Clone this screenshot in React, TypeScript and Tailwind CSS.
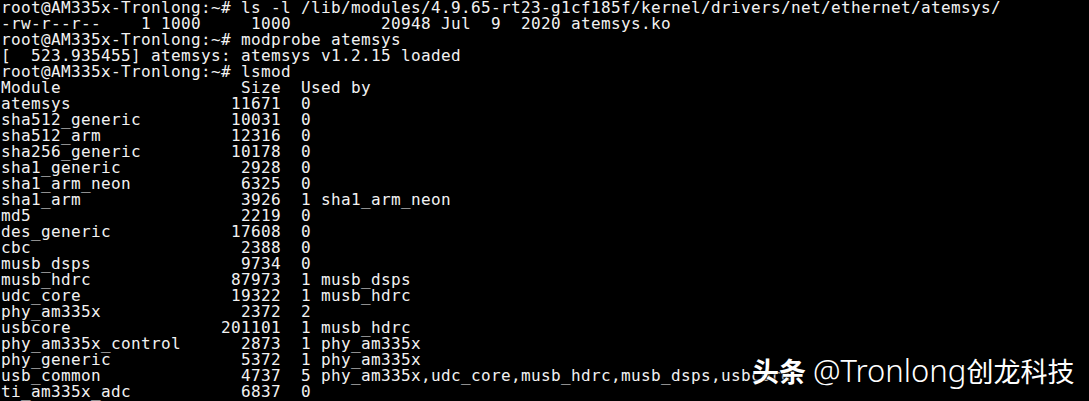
const modules: [string, number, number, string?][] = [
  ["atemsys", 11671, 0],
  ["sha512_generic", 10031, 0],
  ["sha512_arm", 12316, 0],
  ["sha256_generic", 10178, 0],
  ["sha1_generic", 2928, 0],
  ["sha1_arm_neon", 6325, 0],
  ["sha1_arm", 3926, 1, "sha1_arm_neon"],
  ["md5", 2219, 0],
  ["des_generic", 17608, 0],
  ["cbc", 2388, 0],
  ["musb_dsps", 9734, 0],
  ["musb_hdrc", 87973, 1, "musb_dsps"],
  ["udc_core", 19322, 1, "musb_hdrc"],
  ["phy_am335x", 2372, 2],
  ["usbcore", 201101, 1, "musb_hdrc"],
  ["phy_am335x_control", 2873, 1, "phy_am335x"],
  ["phy_generic", 5372, 1, "phy_am335x"],
  ["usb_common", 4737, 5, "phy_am335x,udc_core,musb_hdrc,musb_dsps,usbcore"],
  ["ti_am335x_adc", 6837, 0],
];

const lines = [
  "root@AM335x-Tronlong:~# ls -l /lib/modules/4.9.65-rt23-g1cf185f/kernel/drivers/net/ethernet/atemsys/",
  "-rw-r--r--    1 1000     1000         20948 Jul  9  2020 atemsys.ko",
  "root@AM335x-Tronlong:~# modprobe atemsys",
  "[  523.935455] atemsys: atemsys v1.2.15 loaded",
  "root@AM335x-Tronlong:~# lsmod",
  "Module".padEnd(19) + " " + "Size".padStart(8) + "  Used by",
  ...modules.map(
    ([name, size, count, users]) =>
      name.padEnd(19) + " " + String(size).padStart(8) + "  " + count + (users ? " " + users : "")
  ),
];

export default function App() {
  return (
    <div className="relative w-[1089px] h-[401px] bg-black overflow-hidden">
      <pre className="m-0 pl-[1px] font-['DejaVu_Sans_Mono',monospace] text-[16px] leading-[16px] tracking-[0.367px] text-[#f2f2f2]">
        {lines.map((line, i) => (
          <div key={i} className="h-4 whitespace-pre">
            {line}
          </div>
        ))}
      </pre>

      {/* watermark */}
      <div className="absolute left-[752px] top-[356px] flex items-baseline whitespace-nowrap text-white [text-shadow:0_0_3px_#000,0_0_2px_#000]">
        <span className="font-['Noto_Sans_CJK_SC',sans-serif] text-[27px] leading-[28px] font-bold">头条</span>
        <span className="ml-[7px] font-['Noto_Sans',sans-serif] text-[31px] leading-[28px] font-light">@Tronlong</span>
        <span className="font-['Noto_Sans_CJK_SC',sans-serif] text-[27px] leading-[28px]">创龙科技</span>
      </div>
    </div>
  );
}
